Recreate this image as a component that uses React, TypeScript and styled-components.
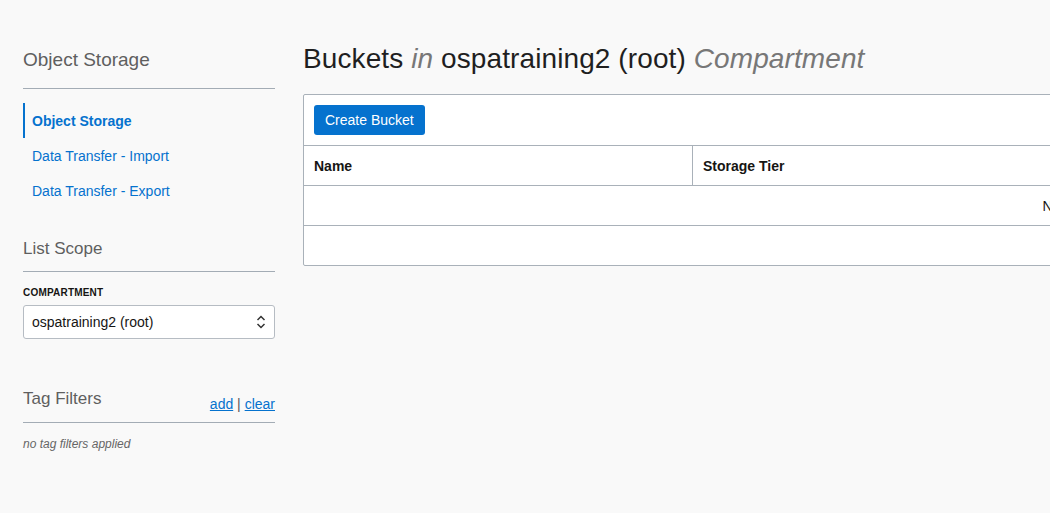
import styled, { createGlobalStyle } from "styled-components";

const Global = createGlobalStyle`
  html, body { margin: 0; padding: 0; background: #f9f9f9; overflow: hidden; }
  body { font-family: "Liberation Sans", Arial, sans-serif; color: #161513; }
`;

const Page = styled.div`
  display: flex;
  align-items: flex-start;
  gap: 28px;
  padding: 44px 0 0 23px;
  width: 2000px;
`;

const Side = styled.aside`
  width: 252px;
  flex: none;
  margin-top: 5px;
`;

const SideTitle = styled.div<{ $first?: boolean }>`
  display: flex;
  justify-content: space-between;
  align-items: flex-end;
  font-size: ${(p) => (p.$first ? "19px" : "17px")};
  line-height: ${(p) => (p.$first ? "22px" : "21px")};
  color: #5f5f5f;
  padding-bottom: ${(p) => (p.$first ? "17px" : "12px")};
  border-bottom: 1px solid #a3acb5;
`;

const Nav = styled.nav`
  display: flex;
  flex-direction: column;
  padding: 14px 0 30px;
`;

const NavItem = styled.a<{ $active?: boolean }>`
  display: flex;
  align-items: center;
  height: 35px;
  font-size: 14px;
  padding-left: 7px;
  color: #0572ce;
  font-weight: ${(p) => (p.$active ? 700 : 400)};
  border-left: 2px solid ${(p) => (p.$active ? "#0572ce" : "transparent")};
  text-decoration: none;
`;

const Label = styled.div`
  font-size: 10px;
  line-height: 12px;
  font-weight: 700;
  letter-spacing: 0.2px;
  margin: 15px 0 6px;
`;

const Select = styled.div`
  box-sizing: border-box;
  display: flex;
  align-items: center;
  justify-content: space-between;
  height: 34px;
  padding: 0 8px;
  background: #fff;
  border: 1px solid #b6bcc3;
  border-radius: 3px;
  font-size: 14px;
`;

const TagSection = styled.div`
  margin-top: 49px;
  ${SideTitle} { padding-bottom: 13px; }
`;

const Links = styled.span`
  font-size: 14px;
  line-height: 16px;
  color: #555;
  margin-bottom: -3px;
  a { color: #0572ce; text-decoration: underline; }
`;

const Empty = styled.div`
  font-size: 12px;
  line-height: 14px;
  font-style: italic;
  color: #666;
  margin-top: 14px;
`;

const Main = styled.main`
  flex: none;
`;

const Heading = styled.h1`
  margin: 0 0 20px;
  font-size: 28px;
  font-weight: 400;
  line-height: 30px;
  color: #1f1f1f;
  letter-spacing: 0.1px;
  em { color: #777; }
`;

const Panel = styled.div`
  width: 1575px;
  background: #fff;
  border: 1px solid #a9b1b9;
  border-radius: 2px;
`;

const Toolbar = styled.div`
  padding: 10px;
  border-bottom: 1px solid #a9b1b9;
`;

const Button = styled.button`
  display: block;
  height: 30px;
  padding: 0 11px;
  border: 0;
  border-radius: 3px;
  background: #0572ce;
  color: #fff;
  font-family: inherit;
  font-size: 14px;
`;

const Row = styled.div<{ $head?: boolean }>`
  display: grid;
  grid-template-columns: 389px 1fr;
  height: 39px;
  font-size: 14px;
  font-weight: ${(p) => (p.$head ? 700 : 400)};
`;

const Cell = styled.div<{ $divider?: boolean }>`
  display: flex;
  align-items: center;
  padding: 0 10px;
  border-right: ${(p) => (p.$divider ? "1px solid #a9b1b9" : "none")};
`;

const Full = styled.div`
  display: flex;
  align-items: center;
  justify-content: center;
  height: 39px;
  border-top: 1px solid #a9b1b9;
  font-size: 14px;
`;

const Chevrons = () => (
  <svg width="10" height="14" viewBox="0 0 10 14" fill="none" stroke="#333" strokeWidth="1.5">
    <path d="M1.5 5 5 1.5 8.5 5" />
    <path d="M1.5 9 5 12.5 8.5 9" />
  </svg>
);

export default function App() {
  return (
    <>
      <Global />
      <Page>
        <Side>
          <SideTitle $first>Object Storage</SideTitle>
          <Nav>
            <NavItem $active>Object Storage</NavItem>
            <NavItem>Data Transfer - Import</NavItem>
            <NavItem>Data Transfer - Export</NavItem>
          </Nav>
          <SideTitle>List Scope</SideTitle>
          <Label>COMPARTMENT</Label>
          <Select>
            <span>ospatraining2 (root)</span>
            <Chevrons />
          </Select>
          <TagSection>
            <SideTitle>
              <span>Tag Filters</span>
              <Links>
                <a>add</a> | <a>clear</a>
              </Links>
            </SideTitle>
            <Empty>no tag filters applied</Empty>
          </TagSection>
        </Side>
        <Main>
          <Heading>
            Buckets <em>in</em> ospatraining2 (root) <em>Compartment</em>
          </Heading>
          <Panel>
            <Toolbar>
              <Button>Create Bucket</Button>
            </Toolbar>
            <Row $head>
              <Cell $divider>Name</Cell>
              <Cell>Storage Tier</Cell>
            </Row>
            <Full>No items found.</Full>
            <Full />
          </Panel>
        </Main>
      </Page>
    </>
  );
}
